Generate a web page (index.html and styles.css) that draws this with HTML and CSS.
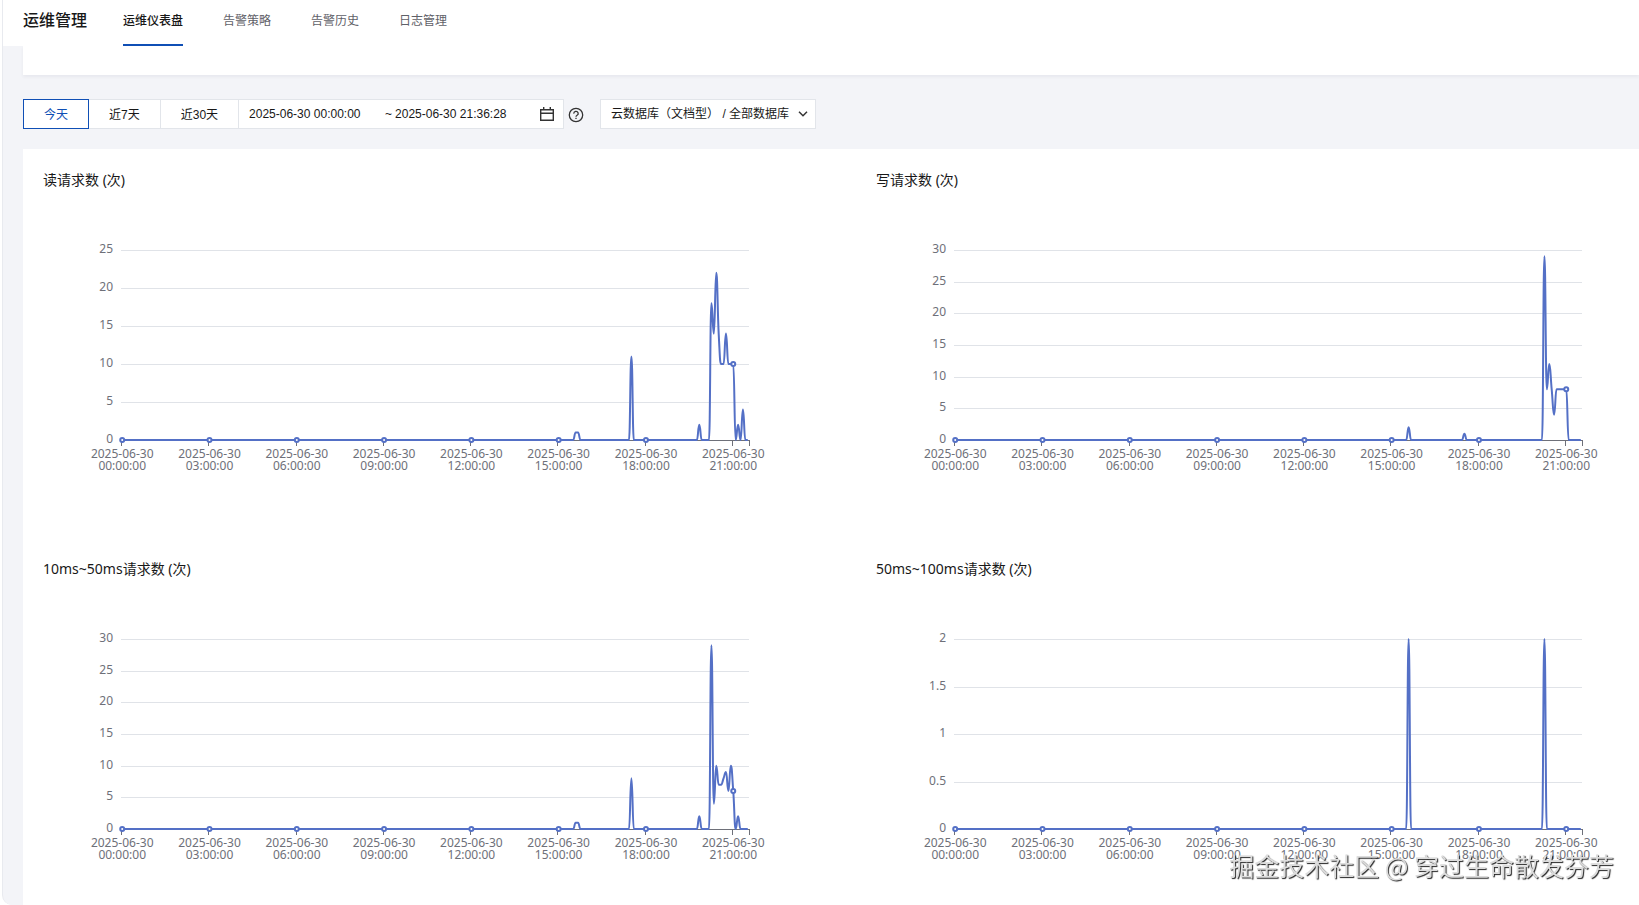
FILE: index.html
```html
<!DOCTYPE html>
<html lang="zh-CN">
  <head>
    <meta charset="UTF-8" />
    <meta name="viewport" content="width=device-width, initial-scale=1.0" />
    <title>运维管理</title>
    <link rel="stylesheet" href="styles.css">
  </head>
  <body>
    <div class="panel">
      <!-- Header -->
      <header class="header">
        <h1>运维管理</h1>
        <nav class="tabs">
          <a href="#" class="tab active">运维仪表盘</a>
          <a href="#" class="tab">告警策略</a>
          <a href="#" class="tab">告警历史</a>
          <a href="#" class="tab">日志管理</a>
        </nav>
      </header>

      <main class="content">
        <div class="card card-top"></div>

        <!-- Filters -->
        <div class="toolbar">
          <div class="range">
            <button type="button" class="range-btn selected">今天</button>
            <button type="button" class="range-btn">近7天</button>
            <button type="button" class="range-btn">近30天</button>
            <div class="date-picker">
              <input type="text" class="date-start" aria-label="开始时间" value="2025-06-30 00:00:00" />
              <span class="date-sep">~</span>
              <input type="text" class="date-end" aria-label="结束时间" value="2025-06-30 21:36:28" />
              <svg class="icon-calendar" width="14" height="14" viewBox="0 0 14 14" fill="none" stroke="#333" stroke-width="1.4">
                <path d="M0.7 2.7h12.6v10.6H0.7zM0.7 6.2h12.6M3.7 0v3M10.3 0v3" />
              </svg>
            </div>
          </div>
          <button type="button" class="help" aria-label="帮助">
            <svg width="16" height="16" viewBox="0 0 16 16" fill="none" stroke="#333" stroke-width="1.3">
              <circle cx="8" cy="8" r="6.7" />
              <path d="M5.8 6.6a2.2 2.1 0 1 1 3.3 1.7c-0.7 0.4-1.1 0.7-1.1 1.5" />
              <path d="M8 10.7v1.4" />
            </svg>
          </button>
          <div class="select">
            <select aria-label="数据库">
              <option>云数据库（文档型） / 全部数据库</option>
            </select>
            <svg width="10" height="6" viewBox="0 0 10 6" fill="none" stroke="#333" stroke-width="1.5">
              <path d="M1 0.8l4 4 4-4" />
            </svg>
          </div>
        </div>

        <!-- Charts -->
        <div class="card charts">
          <section class="chart">
            <h2>读请求数 (次)</h2>
            <svg id="read"></svg>
          </section>
          <section class="chart">
            <h2>写请求数 (次)</h2>
            <svg id="write"></svg>
          </section>
          <section class="chart">
            <h2>10ms~50ms请求数 (次)</h2>
            <svg id="ms10"></svg>
          </section>
          <section class="chart">
            <h2>50ms~100ms请求数 (次)</h2>
            <svg id="ms50"></svg>
          </section>
        </div>
      </main>
    </div>
    <div class="watermark">掘金技术社区 @ 穿过生命散发芬芳</div>
    <script src="charts.js"></script>
  </body>
</html>
```
FILE: styles.css
```css
:root {
  --primary: #0f4fb5;
  --text: #181818;
  --muted: #5f6168;
  --bg: #f3f4f8;
  --border: #e2e5ea;
  --axis: #6e7079;
  --split: #e0e3e8;
  --series: #5470c6;
}

* {
  margin: 0;
  padding: 0;
  box-sizing: border-box;
}

body {
  background: #fff;
  color: var(--text);
  font-family: "Liberation Sans", "Noto Sans CJK SC", sans-serif;
  font-size: 12px;
}

button,
input,
select {
  font: inherit;
  color: inherit;
}

.panel {
  display: flex;
  flex-direction: column;
  height: 100vh;
  margin-left: 2px;
  border-left: 1px solid #e8eaef;
  border-bottom-left-radius: 10px;
  background: var(--bg);
  overflow: hidden;
}

.header {
  display: flex;
  flex-shrink: 0;
  height: 46px;
  padding-left: 20px;
  background: #fff;
}

.header h1 {
  width: 64px;
  margin-right: 36px;
  font-size: 16px;
  font-weight: 500;
  line-height: 42px;
}

.tabs {
  display: flex;
  gap: 40px;
}

.tab {
  color: var(--muted);
  line-height: 43px;
  text-decoration: none;
}

.tab.active {
  color: var(--text);
  font-weight: 500;
  border-bottom: 2px solid var(--primary);
}

.content {
  display: flex;
  flex: 1;
  flex-direction: column;
  min-height: 0;
  padding-left: 20px;
}

.card {
  background: #fff;
}

.card-top {
  flex-shrink: 0;
  height: 29px;
  box-shadow: 0 2px 3px rgba(54, 58, 80, 0.06);
}

/* Toolbar */
.toolbar {
  display: flex;
  flex-shrink: 0;
  align-items: center;
  margin: 24px 0 20px;
}

.range {
  display: flex;
  height: 30px;
}

.range-btn {
  padding: 0 20px 1px;
  background: #fff;
  border: 1px solid var(--border);
  border-left: none;
  cursor: pointer;
}

.range-btn.selected {
  color: var(--primary);
  border: 1px solid var(--primary);
}

.date-picker {
  display: flex;
  align-items: center;
  width: 325px;
  padding: 0 9px 0 10px;
  background: #fff;
  border: 1px solid var(--border);
  border-left: none;
}

.date-picker input {
  width: 136px;
  border: none;
  outline: none;
  background: none;
}

.date-picker .date-end {
  width: 120px;
  margin-right: auto;
}

.date-sep {
  width: 10px;
}

.help {
  display: flex;
  margin: 2px 16px 0 4px;
  background: none;
  border: none;
  cursor: pointer;
}

.select {
  position: relative;
}

.select select {
  width: 216px;
  height: 30px;
  padding: 0 10px 1px;
  appearance: none;
  background: #fff;
  border: 1px solid var(--border);
  border-radius: 0;
}

.select svg {
  position: absolute;
  top: 12px;
  right: 8px;
  pointer-events: none;
}

/* Charts run a little past the right edge of the panel */
.charts {
  display: grid;
  flex: 1;
  grid-template-columns: 1fr 1fr;
  align-content: start;
  gap: 57px 48px;
  margin-right: -42px;
  padding: 20px;
}

.chart h2 {
  font-family: "Noto Sans", "Noto Sans CJK SC", sans-serif;
  font-size: 14px;
  font-weight: 400;
  line-height: 22px;
}

.chart svg {
  display: block;
  width: 100%;
  height: 310px;
}

.chart text {
  fill: var(--axis);
  font-family: "Noto Sans", sans-serif;
  font-size: 12px;
}

.y-label {
  text-anchor: end;
}

.x-label {
  text-anchor: middle;
}

.split {
  stroke: var(--split);
}

.axis {
  stroke: var(--axis);
}

.series {
  fill: none;
  stroke: var(--series);
  stroke-width: 2;
  stroke-linejoin: bevel;
}

.symbol {
  fill: #fff;
  stroke: var(--series);
  stroke-width: 2;
}

.watermark {
  position: fixed;
  right: 25px;
  bottom: 22px;
  color: #dcdcdc;
  font-family: "Noto Sans CJK SC", sans-serif;
  font-size: 25px;
  line-height: 36px;
  text-shadow: 1px 1px 1px #222;
  pointer-events: none;
}
```
FILE: charts.js
```js
// One sample every 5 minutes, 00:00 to 21:30. Slots not listed are 0.
const COUNT = 259;
const LABEL_EVERY = 36;
const TOP = 59;
const PLOT_HEIGHT = 190;

const charts = {
  read: {
    max: 25,
    step: 5,
    data: {
      187: 1, 188: 1, 210: 11, 238: 2, 243: 18, 244: 14, 245: 22, 246: 14,
      247: 10, 248: 10, 249: 14, 250: 10, 251: 10, 252: 10, 254: 2, 256: 4
    }
  },
  write: {
    max: 30,
    step: 5,
    data: {
      187: 2, 210: 1, 243: 29, 244: 8, 245: 12, 246: 8, 247: 4,
      248: 8, 249: 8, 250: 8, 251: 8, 252: 8
    }
  },
  ms10: {
    max: 30,
    step: 5,
    data: {
      187: 1, 188: 1, 210: 8, 238: 2, 243: 29, 244: 4, 245: 10, 246: 7,
      247: 7, 248: 8, 249: 9, 250: 6, 251: 10, 252: 6, 254: 2
    }
  },
  ms50: {
    max: 2,
    step: 0.5,
    data: { 187: 2, 243: 2 }
  }
};

// Slope is flat at peaks and dips so the curve never overshoots
function slope(points, i) {
  const prev = points[i - 1];
  const next = points[i + 1];
  if (!prev || !next) return 0;
  const a = points[i][1] - prev[1];
  const b = next[1] - points[i][1];
  if (a * b <= 0) return 0;
  return Math.sign(a) * Math.min(Math.abs(a + b) / 2, Math.abs(a) * 2, Math.abs(b) * 2);
}

function smoothPath(points) {
  let d = `M${points[0]}`;
  for (let i = 1; i < points.length; i++) {
    const [x0, y0] = points[i - 1];
    const [x1, y1] = points[i];
    const dx = (x1 - x0) / 2;
    d += `C${x0 + dx},${y0 + slope(points, i - 1) / 2} ${x1 - dx},${y1 - slope(points, i) / 2} ${x1},${y1}`;
  }
  return d;
}

function draw(id, { max, step, data }) {
  const svg = document.getElementById(id);
  const width = svg.clientWidth;
  const left = Math.floor(width * 0.1);
  const right = width - left - 1;
  const bottom = TOP + PLOT_HEIGHT;
  const band = (right - left) / COUNT;
  let html = "";

  for (let v = 0; v <= max; v += step) {
    const y = Math.round(bottom - (v / max) * PLOT_HEIGHT);
    if (v > 0) {
      html += `<line class="split" x1="${left}" x2="${right}" y1="${y + 0.5}" y2="${y + 0.5}" />`;
    }
    html += `<text class="y-label" x="${left - 8}" y="${y + 3}">${v}</text>`;
  }

  html += `<line class="axis" x1="${left}" x2="${right}" y1="${bottom + 0.5}" y2="${bottom + 0.5}" />`;
  html += `<line class="axis" x1="${right + 0.5}" x2="${right + 0.5}" y1="${bottom}" y2="${bottom + 6}" />`;

  const points = [];
  for (let i = 0; i < COUNT; i++) {
    points.push([left + (i + 0.5) * band, bottom - ((data[i] || 0) / max) * PLOT_HEIGHT]);
  }

  let symbols = "";
  for (let i = 0; i < COUNT; i += LABEL_EVERY) {
    const [x, y] = points[i];
    const tick = Math.round(left + i * band) + 0.5;
    const hour = String(i / 12).padStart(2, "0");
    html += `<line class="axis" x1="${tick}" x2="${tick}" y1="${bottom}" y2="${bottom + 6}" />`;
    html += `<text class="x-label" x="${x}" y="${bottom + 18}">2025-06-30</text>`;
    html += `<text class="x-label" x="${x}" y="${bottom + 30}">${hour}:00:00</text>`;
    symbols += `<circle class="symbol" cx="${x}" cy="${y}" r="2" />`;
  }

  html += `<path class="series" d="${smoothPath(points)}" />`;
  svg.innerHTML = html + symbols;
}

function drawAll() {
  Object.keys(charts).forEach((id) => draw(id, charts[id]));
}

drawAll();
window.addEventListener("resize", drawAll);
```
